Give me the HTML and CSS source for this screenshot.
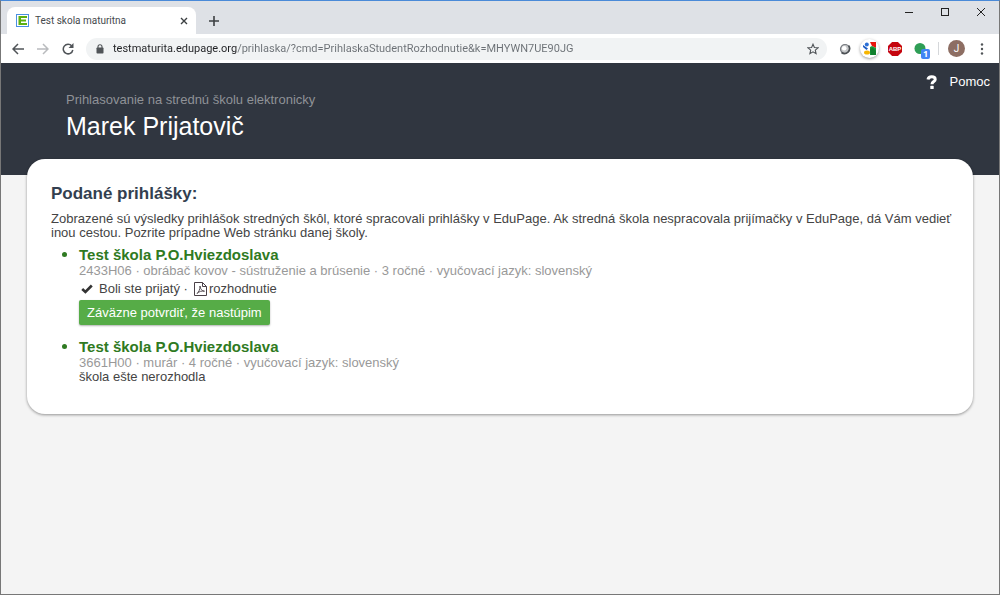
FILE: index.html
```html
<!DOCTYPE html>
<html lang="sk">

<head>
    <meta charset="UTF-8">
    <meta name="viewport" content="width=device-width, initial-scale=1.0">
    <title>Test skola maturitna</title>
    <link rel="stylesheet" href="styles.css">
</head>

<body>
<div class="window">

    <div class="tabbar">
        <div class="tab">
            <svg class="favicon" width="13" height="13" viewBox="0 0 13 13" aria-hidden="true">
                <rect x="0.5" y="0.5" width="12" height="12" fill="#fff" stroke="#4a90e2"/>
                <path d="M2.500 2h8.500v2H5v1.500h5v2H5V9h6v2H2.500z" fill="#5cb010"/>
            </svg>
            <span class="tab-title">Test skola maturitna</span>
            <button class="icon-btn" type="button" aria-label="Close tab">
                <svg width="8" height="8" viewBox="0 0 8 8"><path d="M1 1l6 6M7 1L1 7" stroke="#3c4043" stroke-width="1.4"/></svg>
            </button>
        </div>
        <button class="icon-btn new-tab" type="button" aria-label="New tab">
            <svg width="10" height="10" viewBox="0 0 10 10"><path d="M5 0v10M0 5h10" stroke="#3c4043" stroke-width="1.6"/></svg>
        </button>
        <div class="window-buttons">
            <button class="icon-btn" type="button" aria-label="Minimize">
                <svg width="10" height="10" viewBox="0 0 10 10"><path d="M1 5.5h8" stroke="#222"/></svg>
            </button>
            <button class="icon-btn" type="button" aria-label="Maximize">
                <svg width="10" height="10" viewBox="0 0 10 10"><rect x="1.5" y="1.5" width="7" height="7" fill="none" stroke="#222"/></svg>
            </button>
            <button class="icon-btn" type="button" aria-label="Close">
                <svg width="10" height="10" viewBox="0 0 10 10"><path d="M1 1l8 8M9 1L1 9" stroke="#222"/></svg>
            </button>
        </div>
    </div>

    <div class="toolbar">
        <div class="nav-buttons">
            <button class="icon-btn" type="button" aria-label="Back">
                <svg width="12" height="12" viewBox="0 0 12 12" fill="none" stroke="#505458" stroke-width="1.5"><path d="M12 6H1.5M6 1L1 6l5 5"/></svg>
            </button>
            <button class="icon-btn" type="button" aria-label="Forward">
                <svg width="12" height="12" viewBox="0 0 12 12" fill="none" stroke="#b9bbbe" stroke-width="1.5"><path d="M0 6h10.5M6 1l5 5-5 5"/></svg>
            </button>
            <button class="icon-btn" type="button" aria-label="Reload">
                <svg width="12" height="12" viewBox="0 0 12 12"><path d="M9.8 3A4.8 4.8 0 1 0 10.8 7" fill="none" stroke="#505458" stroke-width="1.5"/><path d="M11.5 0v5h-5z" fill="#505458"/></svg>
            </button>
        </div>
        <div class="address">
            <svg width="8" height="10" viewBox="0 0 8 10" aria-hidden="true"><path d="M2 4V2.800a2 2 0 0 1 4 0V4" fill="none" stroke="#505458" stroke-width="1.100"/><rect x="0.500" y="3.500" width="7" height="6" rx="0.800" fill="#505458"/></svg>
            <input class="url" type="text" aria-label="Address" value="testmaturita.edupage.org/prihlaska/?cmd=PrihlaskaStudentRozhodnutie&amp;k=MHYWN7UE90JG">
            <button class="icon-btn" type="button" aria-label="Bookmark">
                <svg width="12" height="12" viewBox="0 0 12 12"><path d="M6 1.200l1.400 3.300 3.600.3-2.700 2.400.8 3.500L6 8.800l-3.100 1.900.8-3.500L1 4.800l3.600-.3z" fill="none" stroke="#505458" stroke-width="1.100"/></svg>
            </button>
        </div>
        <div class="extensions">
            <button class="icon-btn" type="button" aria-label="Extension">
                <svg width="12" height="12" viewBox="0 0 12 12"><circle cx="6" cy="6" r="4.500" fill="#c4c6c8" stroke="#777b80" stroke-width="1.200"/><path d="M9.500 2.500a5 5 0 0 1-7 7" fill="none" stroke="#4c5054" stroke-width="1.600"/><circle cx="5.200" cy="5.200" r="2.300" fill="#fff"/></svg>
            </button>
            <button class="icon-btn google" type="button" aria-label="Google">
                <svg width="13" height="13" viewBox="0 0 13 13"><path d="M7 0h6v6L9 4z" fill="#e8160c"/><path d="M7 5l2-1 4 2v7H7z" fill="#1a9a3c"/><path d="M7 7.500l2.500-2L13 9v4H8z" fill="#11802e"/><circle cx="3.800" cy="2.400" r="2" fill="#2a6fd6"/><path d="M0 3l5 3.500L3.500 8 0 5z" fill="#1d5cc4"/><ellipse cx="4" cy="10.500" rx="3" ry="2" fill="#f7b500"/></svg>
            </button>
            <button class="icon-btn" type="button" aria-label="AdBlock Plus">
                <svg width="14" height="14" viewBox="0 0 14 14"><path d="M4.100 0h5.800L14 4.100v5.800L9.900 14H4.100L0 9.900V4.100z" fill="#c5050e"/><text class="abp" x="7" y="9" text-anchor="middle">ABP</text></svg>
            </button>
            <button class="icon-btn counter" type="button" aria-label="Extension, 1 item">
                <svg width="12" height="12" viewBox="0 0 12 12"><circle cx="6" cy="5.500" r="5.500" fill="#2f9e56"/></svg>
                <span class="badge">1</span>
            </button>
            <span class="divider"></span>
            <button class="avatar" type="button" aria-label="Profile">J</button>
            <button class="icon-btn menu" type="button" aria-label="Menu">
                <svg width="4" height="12" viewBox="0 0 4 12" fill="#505458"><circle cx="2" cy="1.500" r="1.200"/><circle cx="2" cy="6" r="1.200"/><circle cx="2" cy="10.500" r="1.200"/></svg>
            </button>
        </div>
    </div>

    <header class="header">
        <div class="heading">
            <p class="subtitle">Prihlasovanie na strednú školu elektronicky</p>
            <h1>Marek Prijatovič</h1>
        </div>
        <a class="help" href="#">
            <svg width="12" height="14" viewBox="0 0 12 14" aria-hidden="true"><path d="M2 4.600C2.300 2.700 3.800 1.800 5.700 1.800c2.200 0 3.500 1 3.500 2.600C9.200 6.700 6 6.400 6 9.300" fill="none" stroke="#fff" stroke-width="3"/><rect x="4.300" y="10.800" width="3.400" height="3.200" rx="0.600" fill="#fff"/></svg>
            Pomoc
        </a>
    </header>

    <main class="card">
        <h2>Podané prihlášky:</h2>
        <p>Zobrazené sú výsledky prihlášok stredných škôl, ktoré spracovali prihlášky v EduPage. Ak stredná škola nespracovala prijímačky v EduPage, dá Vám vedieť inou cestou. Pozrite prípadne Web stránku danej školy.</p>

        <ul class="schools">
            <li>
                <h3>Test škola P.O.Hviezdoslava</h3>
                <div class="details">2433H06 · obrábač kovov - sústruženie a brúsenie · 3 ročné · vyučovací jazyk: slovenský</div>
                <div class="result">
                    <svg class="check" width="12" height="10" viewBox="0 0 12 10" aria-hidden="true"><path d="M1.200 5l3.200 3L10.800 1.500" fill="none" stroke="#333" stroke-width="2.600"/></svg>
                    <span>Boli ste prijatý ·</span>
                    <a class="decision" href="#">
                        <svg width="13" height="14" viewBox="0 0 13 14" fill="none" stroke="#4a4047" aria-hidden="true"><path d="M1 .5h7.500L12.500 4.500v9H.5V.5z"/><path d="M8.500.5v4h4"/><path d="M3 11.500c1.500-1 3.300-4.500 3-7.500.5 3.500 2 5 4.500 5.200C7.500 8.700 5 9.500 3 11.500z" stroke-width="0.900"/></svg>
                        rozhodnutie
                    </a>
                </div>
                <button class="confirm" type="button">Záväzne potvrdiť, že nastúpim</button>
            </li>
            <li>
                <h3>Test škola P.O.Hviezdoslava</h3>
                <div class="details">3661H00 · murár · 4 ročné · vyučovací jazyk: slovenský</div>
                <div>škola ešte nerozhodla</div>
            </li>
        </ul>
    </main>

</div>
</body>

</html>
```
FILE: styles.css
```css
* {
    margin: 0;
    padding: 0;
    box-sizing: border-box;
}

body {
    background-color: #f4f4f4;
    color: #444;
    font-family: "Liberation Sans", Arial, sans-serif;
    font-size: 13px;
    line-height: 14px;
}

.window {
    min-height: 100vh;
    border: 1px solid #777;
    border-top-color: #4a8ad8;
}

svg {
    display: block;
    flex: none;
}

button {
    border: none;
    background: none;
    font-family: inherit;
    cursor: pointer;
}

a {
    color: inherit;
    text-decoration: none;
}

.icon-btn {
    display: flex;
    align-items: center;
    justify-content: center;
}

/* Tab bar */
.tabbar {
    display: flex;
    height: 33px;
    padding-left: 6px;
    background: #dee1e6;
    font-family: "Open Sans", "Noto Sans", sans-serif;
}

.tab {
    display: flex;
    align-items: center;
    gap: 6px;
    width: 189px;
    height: 27px;
    margin-top: 6px;
    padding: 0 8px 0 9px;
    border-radius: 8px 8px 0 0;
    background: #fff;
}

.tab-title {
    flex: 1;
    font-family: Roboto, sans-serif;
    font-size: 10px;
    color: #45494d;
}

.new-tab {
    width: 36px;
    padding-top: 6px;
}

.window-buttons {
    display: flex;
    height: 22px;
    margin-left: auto;
}

.window-buttons button {
    width: 36px;
}

/* Toolbar */
.toolbar {
    display: flex;
    align-items: center;
    gap: 12px;
    height: 29px;
    padding: 0 15px 0 11px;
    background: #fff;
    font-family: "Open Sans", "Noto Sans", sans-serif;
}

.nav-buttons {
    display: flex;
    gap: 13px;
}

.address {
    display: flex;
    flex: 1;
    align-items: center;
    gap: 9px;
    height: 22px;
    padding: 0 8px 0 10px;
    border-radius: 11px;
    background: #f1f3f4;
}

/* the host part is darker than the path */
.url {
    flex: 1;
    min-width: 0;
    border: none;
    outline: none;
    background: linear-gradient(to right, #202124 124px, #6b7075 124px);
    -webkit-background-clip: text;
    background-clip: text;
    color: transparent;
    font-family: Roboto, sans-serif;
    font-size: 11px;
}

.extensions {
    display: flex;
    align-items: center;
    gap: 12px;
}

.google {
    width: 19px;
    height: 19px;
    margin: 0 -3px;
    border-radius: 50%;
    box-shadow: 0 1px 3px rgba(0, 0, 0, 0.4);
}

.abp {
    fill: #fff;
    font-family: "Liberation Sans", Arial, sans-serif;
    font-size: 6px;
    font-weight: bold;
}

.counter {
    position: relative;
}

.badge {
    position: absolute;
    top: 6px;
    left: 7px;
    width: 9px;
    height: 10px;
    border-radius: 2px;
    background: #4285f4;
    color: #fff;
    font-size: 9px;
    font-weight: bold;
    line-height: 10px;
}

.divider {
    width: 1px;
    height: 13px;
    background: #d5d7da;
}

.avatar {
    width: 17px;
    height: 17px;
    margin-left: -3px;
    border-radius: 50%;
    background: #8d6e63;
    color: #fff;
    font-family: Roboto, sans-serif;
    font-size: 10px;
}

.menu {
    margin-left: 3px;
}

/* Page header */
.header {
    display: flex;
    justify-content: space-between;
    align-items: flex-start;
    height: 112px;
    padding: 12px 9px 0 65px;
    background: #303640;
    color: #fff;
}

.heading {
    padding-top: 18px;
}

.subtitle {
    color: #8f9297;
}

h1 {
    margin-top: 3px;
    font-size: 25px;
    font-weight: normal;
    line-height: 32px;
}

.help {
    display: flex;
    align-items: center;
    gap: 12px;
}

/* Applications */
.card {
    min-height: 255px;
    margin: -16px 26px 0;
    padding: 25px 16px 24px 24px;
    border-radius: 18px;
    background: #fff;
    box-shadow: 0 1px 3px rgba(0, 0, 0, 0.4);
}

h2 {
    margin-bottom: 8px;
    color: #333f50;
    font-size: 17px;
    line-height: 20px;
}

.schools {
    margin-top: 7px;
    padding-left: 28px;
}

.schools li {
    margin-bottom: 14px;
}

.schools li:last-child {
    margin-bottom: 0;
}

.schools li::marker {
    color: #2f7a22;
    font-size: 17px;
}

h3 {
    margin-bottom: 2px;
    color: #2f7a22;
    font-size: 15px;
    line-height: 15px;
}

.details {
    color: #999;
}

.result {
    display: flex;
    align-items: center;
    gap: 6px;
    padding: 4px 0 4px 2px;
}

.decision {
    display: flex;
    align-items: center;
    gap: 2px;
}

.confirm {
    height: 25px;
    padding: 0 8px;
    border-radius: 2px;
    background: #56ac47;
    box-shadow: 0 1px 2px rgba(0, 0, 0, 0.3);
    color: #fff;
    font-size: 13px;
}
```
